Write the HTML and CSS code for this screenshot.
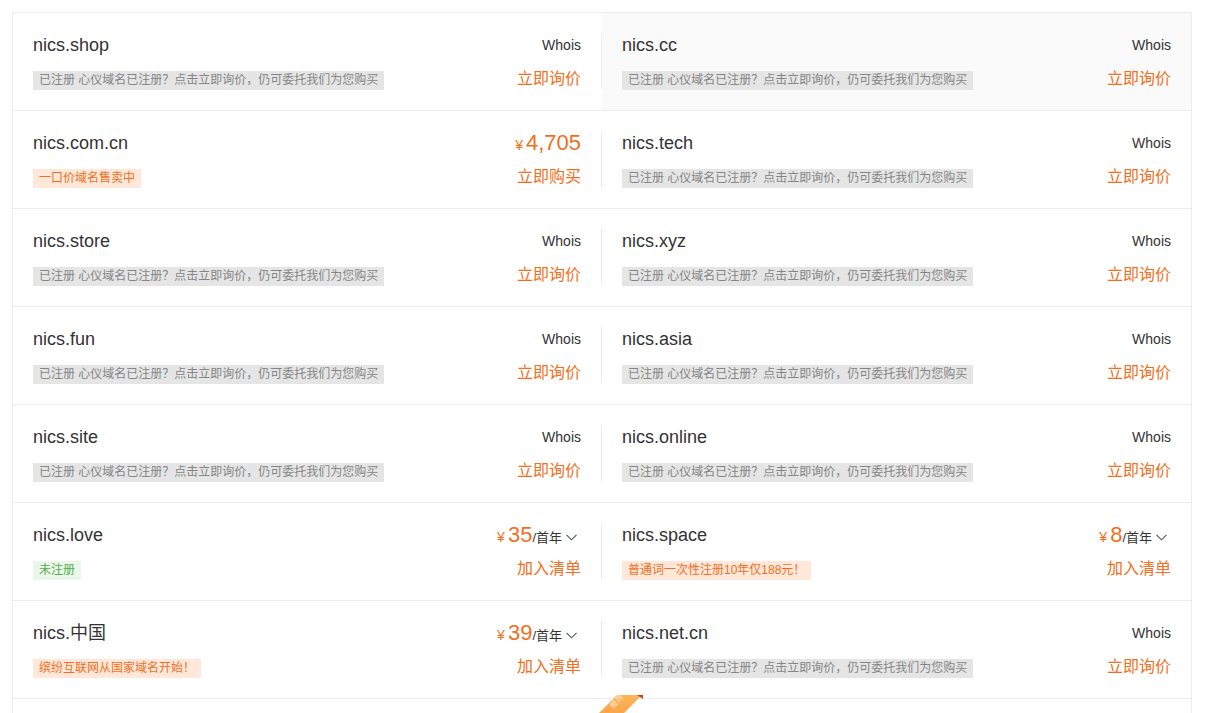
FILE: index.html
```html
<!DOCTYPE html>
<html lang="zh-CN">
<head>
<meta charset="utf-8">
<title>域名查询结果</title>
<link rel="stylesheet" href="styles.css">
</head>
<body>
<div class="list">
  <div class="row">
    <div class="cell"><div class="inner">
      <div class="line top"><span class="name">nics.shop</span><span class="whois">Whois</span></div>
      <div class="line bottom"><span class="tag gray">已注册 心仪域名已注册？点击立即询价，仍可委托我们为您购买</span><span class="action">立即询价</span></div>
    </div></div>
    <div class="cell hover"><div class="inner">
      <div class="line top"><span class="name">nics.cc</span><span class="whois">Whois</span></div>
      <div class="line bottom"><span class="tag gray">已注册 心仪域名已注册？点击立即询价，仍可委托我们为您购买</span><span class="action">立即询价</span></div>
    </div></div>
  </div>
  <div class="row">
    <div class="cell"><div class="inner">
      <div class="line top"><span class="name">nics.com.cn</span><span class="price"><span class="yen">¥</span><span class="num">4,705</span></span></div>
      <div class="line bottom"><span class="tag orange">一口价域名售卖中</span><span class="action">立即购买</span></div>
    </div></div>
    <div class="cell"><div class="inner">
      <div class="line top"><span class="name">nics.tech</span><span class="whois">Whois</span></div>
      <div class="line bottom"><span class="tag gray">已注册 心仪域名已注册？点击立即询价，仍可委托我们为您购买</span><span class="action">立即询价</span></div>
    </div></div>
  </div>
  <div class="row">
    <div class="cell"><div class="inner">
      <div class="line top"><span class="name">nics.store</span><span class="whois">Whois</span></div>
      <div class="line bottom"><span class="tag gray">已注册 心仪域名已注册？点击立即询价，仍可委托我们为您购买</span><span class="action">立即询价</span></div>
    </div></div>
    <div class="cell"><div class="inner">
      <div class="line top"><span class="name">nics.xyz</span><span class="whois">Whois</span></div>
      <div class="line bottom"><span class="tag gray">已注册 心仪域名已注册？点击立即询价，仍可委托我们为您购买</span><span class="action">立即询价</span></div>
    </div></div>
  </div>
  <div class="row">
    <div class="cell"><div class="inner">
      <div class="line top"><span class="name">nics.fun</span><span class="whois">Whois</span></div>
      <div class="line bottom"><span class="tag gray">已注册 心仪域名已注册？点击立即询价，仍可委托我们为您购买</span><span class="action">立即询价</span></div>
    </div></div>
    <div class="cell"><div class="inner">
      <div class="line top"><span class="name">nics.asia</span><span class="whois">Whois</span></div>
      <div class="line bottom"><span class="tag gray">已注册 心仪域名已注册？点击立即询价，仍可委托我们为您购买</span><span class="action">立即询价</span></div>
    </div></div>
  </div>
  <div class="row">
    <div class="cell"><div class="inner">
      <div class="line top"><span class="name">nics.site</span><span class="whois">Whois</span></div>
      <div class="line bottom"><span class="tag gray">已注册 心仪域名已注册？点击立即询价，仍可委托我们为您购买</span><span class="action">立即询价</span></div>
    </div></div>
    <div class="cell"><div class="inner">
      <div class="line top"><span class="name">nics.online</span><span class="whois">Whois</span></div>
      <div class="line bottom"><span class="tag gray">已注册 心仪域名已注册？点击立即询价，仍可委托我们为您购买</span><span class="action">立即询价</span></div>
    </div></div>
  </div>
  <div class="row">
    <div class="cell"><div class="inner">
      <div class="line top"><span class="name">nics.love</span><span class="price"><span class="yen">¥</span><span class="num">35</span><span class="unit">/首年</span><svg class="chev" width="11" height="7" viewBox="0 0 11 7"><path d="M0.5 0.8 L5.5 5.8 L10.5 0.8" fill="none" stroke="#555" stroke-width="1.1"/></svg></span></div>
      <div class="line bottom"><span class="tag green">未注册</span><span class="action">加入清单</span></div>
    </div></div>
    <div class="cell"><div class="inner">
      <div class="line top"><span class="name">nics.space</span><span class="price"><span class="yen">¥</span><span class="num">8</span><span class="unit">/首年</span><svg class="chev" width="11" height="7" viewBox="0 0 11 7"><path d="M0.5 0.8 L5.5 5.8 L10.5 0.8" fill="none" stroke="#555" stroke-width="1.1"/></svg></span></div>
      <div class="line bottom"><span class="tag orange">普通词一次性注册10年仅188元！</span><span class="action">加入清单</span></div>
    </div></div>
  </div>
  <div class="row">
    <div class="cell"><div class="inner">
      <div class="line top"><span class="name">nics.中国</span><span class="price"><span class="yen">¥</span><span class="num">39</span><span class="unit">/首年</span><svg class="chev" width="11" height="7" viewBox="0 0 11 7"><path d="M0.5 0.8 L5.5 5.8 L10.5 0.8" fill="none" stroke="#555" stroke-width="1.1"/></svg></span></div>
      <div class="line bottom"><span class="tag orange">缤纷互联网从国家域名开始！</span><span class="action">加入清单</span></div>
    </div></div>
    <div class="cell"><div class="inner">
      <div class="line top"><span class="name">nics.net.cn</span><span class="whois">Whois</span></div>
      <div class="line bottom"><span class="tag gray">已注册 心仪域名已注册？点击立即询价，仍可委托我们为您购买</span><span class="action">立即询价</span></div>
    </div></div>
  </div>
  <div class="row">
    <div class="cell"></div>
    <div class="cell">
      <span class="ribbon"><span class="ribbon-text">推荐</span></span><span class="fold"></span>
    </div>
  </div>
</div>
</body>
</html>
```
FILE: styles.css
```css
html {
  overflow: hidden;
}
body {
  margin: 0;
  background: #fff;
  font-family: "Liberation Sans", Arial, "Noto Sans CJK SC", sans-serif;
  color: #333;
}
.list {
  margin: 12px 0 0 12px;
  width: 1178px;
  border: 1px solid #ececec;
  border-bottom: none;
}
.row {
  display: flex;
  height: 97px;
  border-bottom: 1px solid #ececec;
}
.cell {
  width: 589px;
  box-sizing: border-box;
  padding: 20px 0 20px 20px;
  position: relative;
}
.cell.hover {
  background: #fafafa;
}
.cell:first-child .inner {
  border-right: 1px solid #ececec;
}
.inner {
  height: 56px;
  padding-right: 20px;
  display: flex;
  flex-direction: column;
  justify-content: space-between;
}
.line {
  display: flex;
  justify-content: space-between;
  align-items: center;
}
.line.top {
  height: 24px;
}
.line.bottom {
  height: 20px;
  margin-bottom: -1px;
}
.name {
  font-size: 18px;
  line-height: 24px;
  color: #333;
}
.whois {
  font-size: 14px;
  line-height: 20px;
  color: #333;
}
.action {
  font-size: 16px;
  line-height: 20px;
  color: #f26f21;
  margin-top: -3px;
}
.tag {
  font-size: 12px;
  line-height: 19px;
  height: 19px;
  padding: 0 6px 0 6px;
}
.tag.gray {
  background: #e5e5e5;
  color: #858585;
}
.tag.orange {
  background: #ffe8da;
  color: #f26f21;
}
.tag.green {
  background: #ebf6ea;
  color: #4fae4b;
}
.price {
  display: flex;
  align-items: baseline;
  color: #f26f21;
  white-space: nowrap;
}
.yen {
  font-size: 14px;
  margin-right: 3px;
}
.num {
  font-size: 22px;
  line-height: 24px;
}
.unit {
  font-size: 13px;
  color: #333;
}
.chev {
  margin-left: 4px;
  margin-right: 4px;
  align-self: center;
  position: relative;
  top: 2px;
}
.ribbon {
  position: absolute;
  left: -15px;
  top: -4px;
  width: 60px;
  height: 40px;
  background: linear-gradient(180deg, #fbb55a 0%, #f7923a 100%);
  clip-path: polygon(30px 0, 55px 0, 25px 30px, 0 30px);
  z-index: 2;
}
.ribbon-text {
  position: absolute;
  left: 22px;
  top: 2px;
  font-size: 8px;
  line-height: 9px;
  color: #fde3c4;
  transform: rotate(-45deg);
}
.fold {
  position: absolute;
  left: 35px;
  top: -4px;
  width: 6px;
  height: 4px;
  background: #c8451f;
  clip-path: polygon(0 0, 100% 0, 100% 100%);
  z-index: 3;
}
```
